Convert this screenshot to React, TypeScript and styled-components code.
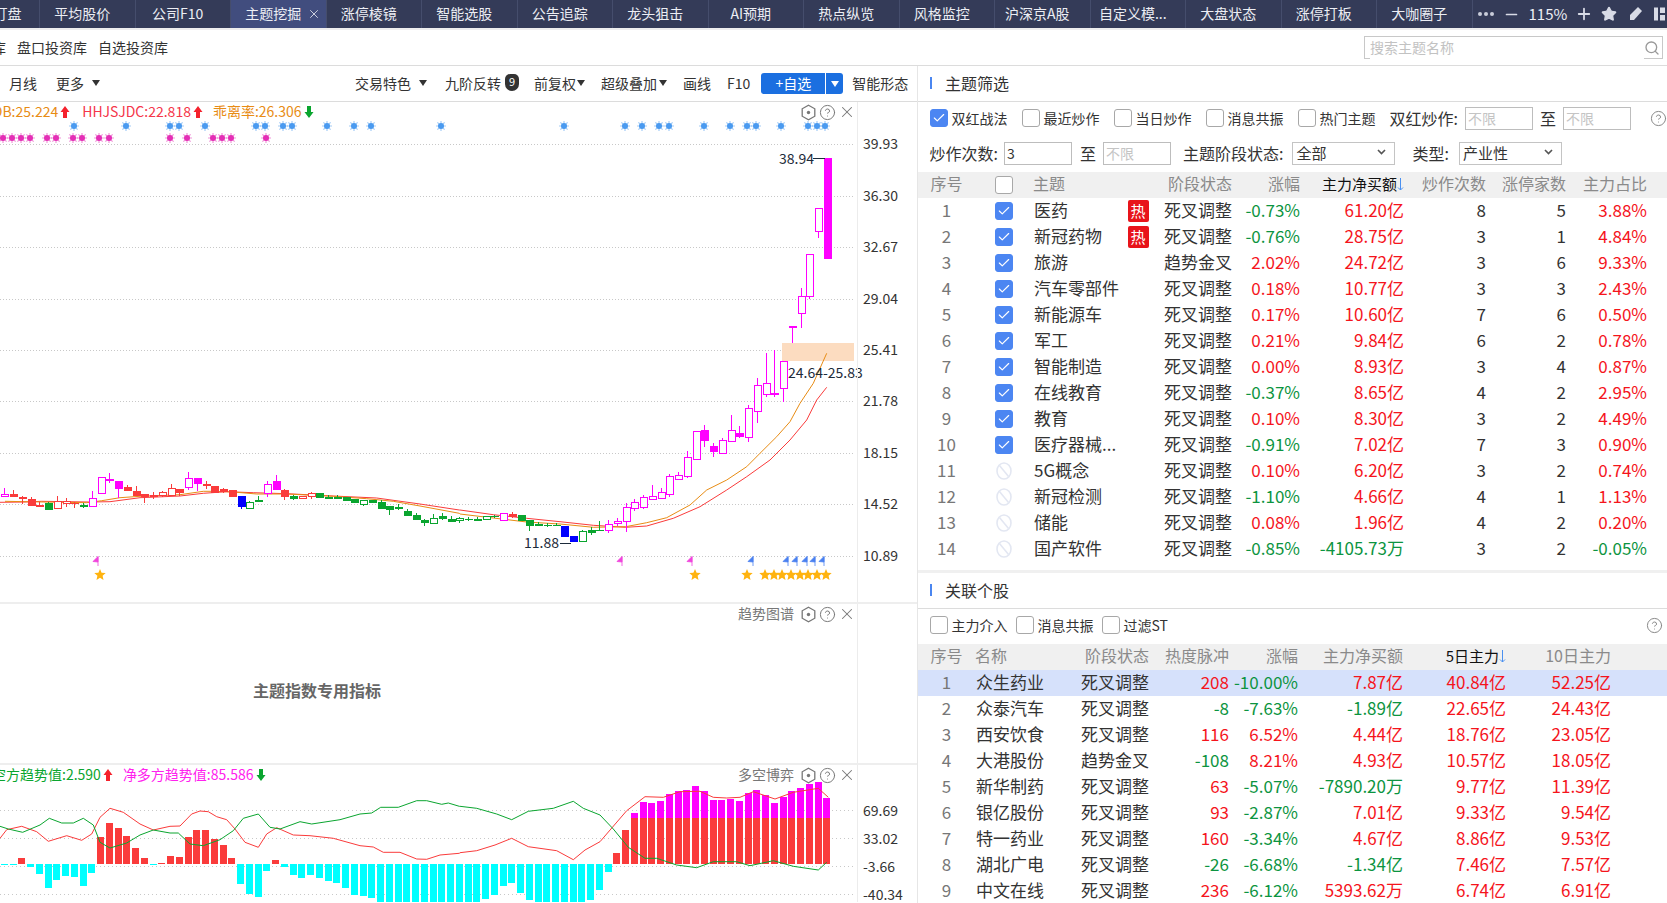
import React from 'react';
import styled, { createGlobalStyle } from 'styled-components';
import { Check, CircleHelp, Minus, Plus, Search, Star, X } from 'lucide-react';

const FONT = '"Noto Sans CJK SC", "Noto Sans", sans-serif';
const RED = '#f5141c';
const GREEN = '#0c9440';
const C_RED = '#fa3b3b';
const C_GREEN = '#0aa52f';
const C_MAGENTA = '#ff00ff';
const C_BLUE = '#0000ff';

const GlobalStyle = createGlobalStyle`
  html, body {
    margin: 0;
    height: 903px;
    overflow: hidden;
    background: #fff;
    font-family: ${FONT};
    color: #333;
  }
  * { box-sizing: border-box; }
`;

const Page = styled.div`
  width: 1667px;
  height: 903px;
  display: flex;
  flex-direction: column;
  overflow: hidden;
`;

/* 顶部标签栏 */
const TabBar = styled.div`
  height: 28px;
  flex: none;
  display: flex;
  background: #343b58;
  color: #eceef4;
  font-size: 14px;
  margin-left: -55.5px;
`;

const Tab = styled.div<{ $active?: boolean; $lead?: number }>`
  position: relative;
  width: 95.5px;
  flex: none;
  display: flex;
  align-items: center;
  justify-content: center;
  padding: 0 10px 2px ${p => p.$lead ?? 0}px;
  white-space: nowrap;
  border-right: 1px solid #454d6c;
  background: ${p => (p.$active ? '#414d7e' : 'transparent')};
`;

const TabClose = styled(X)`
  position: absolute;
  right: 5px;
  top: 7px;
  color: #d5d9e6;
`;

const WinTools = styled.div`
  display: flex;
  align-items: center;
  flex: none;
  padding-left: 4px;
  gap: 8px;
`;

const Percent = styled.span`
  font-size: 15px;
  margin-left: 1px;
  padding-bottom: 2px;
`;

const WinIcon = styled.svg`
  margin-left: 2px;
`;

const Strip = styled.div`
  height: 2px;
  flex: none;
  background: #eeeeee;
`;

/* 投资库 */
const SubBar = styled.div`
  height: 36px;
  flex: none;
  display: flex;
  align-items: center;
  font-size: 14px;
  border-bottom: 1px solid #dcdcdc;
  margin-left: -8px;
  padding-right: 4px;
`;

const SubLink = styled.span<{ $ml: number }>`
  margin-left: ${p => p.$ml}px;
  padding-bottom: 2px;
  white-space: nowrap;
`;

const SearchBox = styled.div`
  margin-left: auto;
  width: 299px;
  height: 23px;
  border: 1px solid #c8c8c8;
  display: flex;
  align-items: center;
  padding: 0 2px 0 5px;
  color: #999;
  input {
    flex: 1;
    min-width: 0;
    border: 0;
    outline: 0;
    padding: 0 0 2px;
    font: 14px ${FONT};
    &::placeholder { color: #c2c2c2; }
  }
`;

const Main = styled.div`
  flex: 1;
  min-height: 0;
  display: flex;
`;

const LeftPane = styled.div`
  width: 918px;
  flex: none;
  display: flex;
  flex-direction: column;
  border-right: 1px solid #e6e6e6;
`;

const ToolBar = styled.div`
  height: 36px;
  flex: none;
  display: flex;
  align-items: center;
  font-size: 14px;
  border-bottom: 1px solid #dcdcdc;
  white-space: nowrap;
`;

const ToolItem = styled.span<{ $ml: number }>`
  margin-left: ${p => p.$ml}px;
  padding-bottom: 2px;
  display: inline-flex;
  align-items: center;
`;

const Caret = styled.i<{ $ml?: number; $light?: boolean }>`
  display: inline-block;
  width: 0;
  height: 0;
  margin-left: ${p => p.$ml ?? 4}px;
  border-left: 4px solid transparent;
  border-right: 4px solid transparent;
  border-top: 6px solid ${p => (p.$light ? '#fff' : '#333')};
`;

const NineBadge = styled.span`
  width: 14px;
  height: 17px;
  margin-left: 4px;
  background: #333;
  color: #fff;
  font-size: 11px;
  line-height: 15px;
  text-align: center;
  border-radius: 5px 5px 7px 7px;
`;

const AddButton = styled.div`
  margin-left: 11px;
  width: 64px;
  height: 21px;
  background: #1b6fe0;
  color: #fff;
  border-radius: 3px 0 0 3px;
  text-align: center;
  line-height: 20px;
`;

const AddDrop = styled.div`
  margin-left: 1px;
  width: 17px;
  height: 21px;
  background: #1b6fe0;
  border-radius: 0 3px 3px 0;
  display: flex;
  align-items: center;
  justify-content: center;
`;

const ChartPanel = styled.div<{ $h: number; $line?: boolean }>`
  position: relative;
  height: ${p => p.$h}px;
  flex: none;
  overflow: hidden;
  border-bottom: ${p => (p.$line ? '2px solid #eeeeee' : '0')};
  &::after {
    content: '';
    position: absolute;
    left: 857px;
    top: 0;
    bottom: 0;
    width: 1px;
    background: #ececec;
  }
`;

const ChartSvg = styled.svg`
  display: block;
  font-family: ${FONT};
`;

const Legend = styled.div<{ $left: number }>`
  position: absolute;
  left: ${p => p.$left}px;
  top: 0;
  height: 20px;
  display: flex;
  align-items: center;
  font-size: 14px;
  white-space: nowrap;
`;

const LegendText = styled.span<{ $color: string; $ml?: number }>`
  color: ${p => p.$color};
  margin-left: ${p => p.$ml ?? 0}px;
  margin-right: 2px;
  padding-bottom: 2px;
`;

const PanelTools = styled.div`
  position: absolute;
  z-index: 1;
  right: 61px;
  top: 0;
  height: 20px;
  display: flex;
  align-items: center;
  gap: 2px;
  font-size: 14px;
  color: #777;
`;

const PanelName = styled.span`
  margin-right: 4px;
  padding-bottom: 2px;
`;

const CenterNote = styled.div`
  position: absolute;
  left: 0;
  width: 634px;
  top: 74px;
  text-align: center;
  font-size: 16px;
  font-weight: 700;
  color: #666;
`;

/* 右侧 */
const RightPane = styled.div`
  flex: 1;
  min-width: 0;
`;

const SectionTitle = styled.div`
  height: 36px;
  display: flex;
  align-items: center;
  font-size: 16px;
  padding: 0 0 2px 12px;
  border-bottom: 1px solid #dcdcdc;
  &::before {
    content: '';
    width: 2px;
    height: 12px;
    background: #4a86f0;
    margin-right: 13px;
  }
`;

const FilterRow = styled.div<{ $gap: number; $end?: number }>`
  height: 35px;
  display: flex;
  align-items: center;
  padding: 0 ${p => p.$end ?? 0}px 3px 11.5px;
  white-space: nowrap;
  gap: ${p => p.$gap}px;
`;

const CheckLabel = styled.label`
  display: inline-flex;
  align-items: center;
  gap: 4px;
  font-size: 14px;
`;

const CheckBox = styled.span<{ $on?: boolean }>`
  width: 18px;
  height: 18px;
  flex: none;
  border-radius: 3px;
  display: inline-flex;
  align-items: center;
  justify-content: center;
  color: #fff;
  background: ${p => (p.$on ? '#4c86f2' : '#fff')};
  border: 1px solid ${p => (p.$on ? '#4c86f2' : '#a8a8a8')};
`;

const FieldLabel = styled.span<{ $ml?: number }>`
  font-size: 16px;
  margin-left: ${p => p.$ml ?? 0}px;
`;

const NumInput = styled.input<{ $ml: number }>`
  width: 68px;
  height: 23px;
  margin-left: ${p => p.$ml}px;
  padding: 0 2px;
  border: 1px solid #bdbdbd;
  outline: 0;
  font: 14px ${FONT};
  color: #333;
  &::placeholder { color: #c4c4c4; }
`;

const SelectBox = styled.div<{ $ml: number }>`
  width: 103px;
  height: 23px;
  margin-left: ${p => p.$ml}px;
  padding: 0 8px 2px 3px;
  border: 1px solid #c4c4c4;
  display: flex;
  align-items: center;
  justify-content: space-between;
  font-size: 15px;
  svg { color: #555; }
`;

const HelpIcon = styled(CircleHelp)`
  margin-left: auto;
  color: #888;
  flex: none;
`;

const TopicGrid = '57px 58px 94px 22px 83px 68px 104px 82px 80px 81px';
const StockGrid = '57px 105px 69px 80px 69px 105px 103px 105px';

const HeadRow = styled.div<{ $cols: string }>`
  height: 26px;
  display: grid;
  grid-template-columns: ${p => p.$cols};
  align-items: center;
  background: #f0f0f0;
  font-size: 16px;
  color: #8a8a8a;
  white-space: nowrap;
`;

const BodyRow = styled.div<{ $cols: string; $picked?: boolean }>`
  height: 26px;
  display: grid;
  grid-template-columns: ${p => p.$cols};
  align-items: center;
  font-size: 17px;
  white-space: nowrap;
  background: ${p => (p.$picked ? '#d6e1fb' : '#fff')};
`;

const Cell = styled.span<{ $align?: string; $tone?: string }>`
  display: block;
  text-align: ${p => p.$align ?? 'right'};
  color: ${p => p.$tone ?? 'inherit'};
  line-height: 23px;
  padding-bottom: 3px;
`;

const NameCell = styled(Cell)`
  padding-left: 1px;
`;

const HeadCell = styled.span<{ $align?: string; $active?: boolean }>`
  display: inline-flex;
  align-items: center;
  justify-content: ${p => (p.$align === 'left' ? 'flex-start' : p.$align === 'center' ? 'center' : 'flex-end')};
  color: ${p => (p.$active ? '#111' : 'inherit')};
  font-size: ${p => (p.$active ? 15 : 16)}px;
  line-height: 23px;
  padding-bottom: 3px;
`;

const IconCell = styled.span`
  display: flex;
  justify-content: center;
  align-items: center;
`;

const HotBadge = styled.span`
  width: 21px;
  height: 22px;
  background: #e8141a;
  color: #fff;
  font-size: 15px;
  line-height: 21px;
  text-align: center;
  border-radius: 2px;
`;

const SectionGap = styled.div`
  height: 11px;
  border-bottom: 3px solid #f0f0f0;
`;

const tone = (v: string) => (v.startsWith('-') ? GREEN : RED);

const xOf = (i: number) => 4.3 + 8.75 * i;

type CandleRow = [string, number, number, number?, number?];

// 纵坐标按截图的 3 倍像素记录，base 为对应的起点
const lowCandles: CandleRow[] = [
  ['m', 223, 230, 205, 230], ['R', 223, 230, 210, 232], ['R', 232, 236, 228, 252], ['R', 238, 257, 232, 258],
  ['R', 255, 260, 245, 260], ['G', 250, 269, 245, 270], ['r', 245, 265, 228, 265], ['r', 245, 250, 235, 260],
  ['R', 248, 251, 245, 263], ['G', 255, 260, 250, 263], ['m', 236, 260, 213, 260], ['m', 172, 220],
  ['M', 178, 183, 160, 190], ['M', 183, 206, 183, 235], ['R', 202, 212, 195, 212], ['R', 213, 228, 198, 228],
  ['R', 222, 232, 222, 248], ['R', 225, 231, 216, 236], ['r', 217, 227, 213, 230], ['r', 205, 227, 192, 227],
  ['R', 208, 219, 208, 228], ['m', 175, 203, 156, 210], ['M', 175, 191, 175, 212], ['R', 193, 197, 183, 207],
  ['R', 198, 218], ['R', 208, 216, 204, 218], ['R', 210, 231], ['B', 228, 260, 228, 266],
  ['g', 248, 265, 243, 265], ['G', 240, 245, 228, 245], ['m', 193, 220, 183, 230], ['M', 183, 209, 165, 209],
  ['R', 210, 231, 207, 240], ['G', 228, 236, 225, 240], ['r', 229, 236], ['r', 221, 230, 216, 236],
  ['G', 220, 234], ['G', 232, 236, 225, 236], ['G', 230, 236, 226, 236], ['G', 232, 242],
  ['G', 238, 248, 238, 250], ['g', 241, 254, 241, 258], ['G', 240, 248], ['G', 247, 266, 240, 266],
  ['G', 259, 269, 259, 285], ['G', 262, 265, 253, 270], ['G', 274, 287, 267, 287], ['G', 286, 299, 280, 299],
  ['G', 301, 310, 298, 318], ['g', 296, 310, 282, 310], ['G', 289, 296, 280, 300], ['G', 297, 305, 289, 305],
  ['g', 295, 302, 292, 308], ['G', 296, 300, 292, 303], ['G', 298, 302, 290, 304], ['g', 290, 298],
  ['G', 288, 292, 285, 294], ['m', 281, 301], ['R', 281, 291, 275, 295], ['G', 284, 304],
  ['G', 301, 319, 301, 332], ['G', 313, 317, 305, 317], ['G', 314, 317, 309, 322], ['G', 315, 319, 308, 319],
  ['B', 319, 350], ['B', 349, 366], ['g', 334, 364, 330, 364], ['G', 331, 340, 320, 346],
  ['G', 330, 334, 304, 334], ['m', 314, 331, 300, 338], ['m', 305, 311, 295, 318], ['m', 263, 304, 250, 335],
  ['m', 247, 265, 238, 272], ['m', 233, 262, 225, 266], ['m', 230, 238, 196, 238], ['m', 218, 235, 205, 235],
  ['m', 170, 223, 162, 230], ['m', 167, 178, 155, 178], ['m', 113, 168, 93, 175], ['m', 35, 118],
  ['M', 29, 64, 15, 80], ['M', 79, 97, 70, 112], ['m', 62, 100, 54, 100],
];

const highCandles: CandleRow[] = [
  ['m', 872, 903, 825, 903], ['M', 880, 890, 858, 895], ['m', 805, 892, 795, 905], ['m', 737, 815, 715, 848],
  ['m', 731, 763, 640, 772], ['M', 760, 764, 631, 772], ['m', 664, 745, 664, 785], ['M', 559, 563, 559, 608],
  ['m', 470, 520, 444, 563], ['m', 343, 470, 343, 477], ['m', 205, 274, 205, 293], ['M', 55, 356],
];

const colorOf = (k: string) => {
  const key = k.toLowerCase();
  if (key === 'r') return C_RED;
  if (key === 'g') return C_GREEN;
  if (key === 'm') return C_MAGENTA;
  return C_BLUE;
};

const Candle = ({ row, i, base }: { row: CandleRow; i: number; base: number }) => {
  const [k, top, bottom, wTop, wBottom] = row;
  const x = Math.round(xOf(i));
  const y = (v: number) => (base + v) / 3;
  const color = colorOf(k);
  const filled = k === k.toUpperCase();
  return (
    <g shapeRendering="crispEdges">
      {wTop !== undefined && wBottom !== undefined && (
        <line x1={x + 0.5} x2={x + 0.5} y1={y(wTop)} y2={y(wBottom)} stroke={color} />
      )}
      {filled ? (
        <rect x={x - 3.5} width={8} y={y(top)} height={Math.max(y(bottom) - y(top), 1.4)} fill={color} />
      ) : (
        <rect x={x - 3} width={7} y={y(top)} height={y(bottom) - y(top)} fill="#fff" stroke={color} />
      )}
    </g>
  );
};

type Pt = [number, number];
const conv = (pts: Pt[], ox: number, oy: number) => pts.map(([x, y]) => `${(ox + x / 3).toFixed(1)},${(oy + y / 3).toFixed(1)}`).join(' ');

const orangeLine = [
  conv([[15, 244], [130, 246], [260, 248], [305, 242], [360, 233], [420, 229], [540, 224], [610, 214], [640, 214], [700, 216], [770, 222], [860, 222], [1000, 229], [1100, 236], [1180, 244], [1260, 258], [1378, 280]], 0, 420),
  conv([[0, 282], [100, 294], [200, 306], [300, 312], [400, 322], [497, 320], [560, 308], [620, 293], [690, 255], [740, 210], [800, 180], [860, 140], [900, 100], [950, 50], [990, 5]], 460, 420),
  conv([[600, 790], [640, 730], [680, 640]], 600, 140),
].join(' ');

const redLine = [
  conv([[0, 247], [75, 246], [125, 244], [265, 246], [330, 245], [420, 233], [540, 228], [610, 220], [680, 215], [760, 218], [860, 221], [1000, 228], [1130, 234], [1260, 252], [1378, 270]], 0, 420),
  conv([[0, 270], [100, 284], [200, 295], [300, 305], [400, 316], [497, 322], [560, 318], [640, 295], [720, 260], [800, 210], [860, 170], [930, 120], [990, 60], [1040, 0]], 460, 420),
  conv([[650, 780], [680, 742]], 600, 140),
].join(' ');

const blueDots = [74, 126, 170, 179, 205, 256, 265, 283, 292, 327, 354, 371, 441, 564, 625, 642, 659, 669, 704, 730, 747, 756, 781, 808, 817, 825];
const pinkDots = [3, 12, 21, 30, 47, 56, 73, 82, 99, 109, 170, 187, 213, 222, 231, 266];
const pinkFlags = [98, 622, 692];
const blueFlags = [753, 788, 797, 807, 815, 824];
const goldStars = [100, 695, 747, 765, 774, 782, 791, 800, 808, 817, 826];
const priceAxis: [string, number][] = [
  ['39.93', 144], ['36.30', 196], ['32.67', 247], ['29.04', 299], ['25.41', 350], ['21.78', 401], ['18.15', 453], ['14.52', 504], ['10.89', 556],
];

const Dot = ({ x, y, color }: { x: number; y: number; color: string }) => (
  <g stroke={color} strokeWidth={1.2}>
    <circle cx={x} cy={y} r={3} fill={color} stroke="none" />
    <path d={`M${x - 5} ${y}H${x + 5}M${x} ${y - 5}V${y + 5}M${x - 3.6} ${y - 3.6}L${x + 3.6} ${y + 3.6}M${x + 3.6} ${y - 3.6}L${x - 3.6} ${y + 3.6}`} opacity={0.5} />
  </g>
);

const Flag = ({ x, color }: { x: number; color: string }) => (
  <g fill={color} stroke={color} strokeWidth={0.8}>
    <polygon points={`${x - 5},561.5 ${x},556.5 ${x},562`} />
    <line x1={x} x2={x} y1={556.5} y2={566} />
  </g>
);

const GoldStar = ({ x }: { x: number }) => {
  const pts: string[] = [];
  for (let k = 0; k < 10; k += 1) {
    const r = k % 2 === 0 ? 6 : 2.7;
    const a = -Math.PI / 2 + (k * Math.PI) / 5;
    pts.push(`${(x + r * Math.cos(a)).toFixed(1)},${(575 + r * Math.sin(a)).toFixed(1)}`);
  }
  return <polygon points={pts.join(' ')} fill="#ffb30f" />;
};

const MainChart = () => (
  <ChartSvg width={917} height={501} viewBox="0 102 917 501">
    {priceAxis.map(([label, y]) => (
      <g key={label}>
        <line x1={0} x2={853} y1={y + 0.5} y2={y + 0.5} stroke="#c8c8c8" strokeDasharray="1 2" />
        <text x={863} y={y + 5} fontSize={14} fill="#333">{label}</text>
      </g>
    ))}
    {blueDots.map(x => <Dot key={x} x={x} y={126} color="#4a9af0" />)}
    {pinkDots.map(x => <Dot key={x} x={x} y={138} color="#e42fb6" />)}
    <rect x={782} y={343} width={72} height={18} fill="#fcdcc0" />
    <polyline points={redLine} fill="none" stroke={C_RED} strokeWidth={1} />
    <polyline points={orangeLine} fill="none" stroke="#e88c14" strokeWidth={1} />
    {lowCandles.map((row, i) => <Candle key={i} row={row} i={i} base={1260} />)}
    {highCandles.map((row, i) => <Candle key={i} row={row} i={i + 83} base={420} />)}
    <text x={779} y={164} fontSize={14} fill="#1d2b3a">38.94</text>
    <line x1={813} x2={825} y1={158.5} y2={158.5} stroke="#1d2b3a" />
    <text x={788} y={378} fontSize={14} fill="#1d2b3a">24.64-25.83</text>
    <text x={524} y={548} fontSize={14} fill="#1d2b3a">11.88</text>
    <line x1={560} x2={571} y1={543.5} y2={543.5} stroke="#1d2b3a" />
    {pinkFlags.map(x => <Flag key={x} x={x} color="#f044dc" />)}
    {blueFlags.map(x => <Flag key={x} x={x} color="#4a80f0" />)}
    {goldStars.map(x => <GoldStar key={x} x={x} />)}
  </ChartSvg>
);

const barTops: [string, number][] = [
  ['c', 347], ['c', 347], ['r', 327], ['c', 354], ['c', 375], ['c', 417], ['c', 393], ['c', 381], ['c', 384], ['c', 411],
  ['c', 372], ['r', 264], ['r', 222], ['r', 237], ['r', 261], ['r', 297], ['r', 327], ['c', 347], ['r', 343], ['r', 321],
  ['r', 324], ['r', 264], ['r', 243], ['r', 243], ['r', 270], ['r', 288], ['r', 327], ['c', 405], ['c', 435], ['c', 443],
  ['c', 366], ['r', 333], ['c', 354], ['c', 378], ['c', 387], ['c', 378], ['c', 387], ['c', 396], ['c', 402], ['c', 417],
  ['c', 438], ['c', 441], ['c', 447], ['c', 459], ['c', 459], ['c', 459], ['c', 459], ['c', 459], ['c', 459], ['c', 459],
  ['c', 459], ['c', 459], ['c', 459], ['c', 459], ['c', 459], ['c', 450], ['c', 438], ['c', 411], ['c', 402], ['c', 432],
  ['c', 453], ['c', 459], ['c', 459], ['c', 459], ['c', 459], ['c', 459], ['c', 459], ['c', 453], ['c', 423], ['c', 369],
  ['r', 312], ['r', 243], ['r', 192], ['r', 159], ['r', 162], ['r', 156], ['r', 135], ['r', 126], ['r', 123], ['r', 111],
  ['r', 126], ['r', 153], ['r', 153], ['r', 150], ['r', 156], ['r', 132], ['r', 123], ['r', 138], ['r', 162], ['r', 145],
  ['r', 126], ['r', 117], ['r', 105], ['r', 99], ['r', 147],
];

const gameRed = [
  conv([[0, 268], [20, 242], [65, 232], [110, 248], [145, 277], [200, 260], [245, 274], [275, 255], [300, 205], [330, 178], [370, 190], [420, 225], [460, 243], [510, 232], [540, 231], [575, 195], [600, 186], [625, 188], [650, 203], [680, 212], [705, 240], [735, 280], [775, 295], [800, 255], [830, 236], [880, 258], [930, 260], [1000, 268], [1080, 290], [1120, 294], [1150, 310], [1200, 310], [1250, 330], [1280, 331], [1320, 318], [1378, 313]], 0, 750),
  conv([[0, 311], [50, 305], [105, 288], [155, 268], [205, 293], [290, 305], [340, 332], [375, 303], [420, 278], [500, 185], [555, 143], [610, 145], [660, 128], [720, 127], [760, 145], [800, 147], [840, 145], [880, 128], [945, 150], [1000, 130], [1075, 118], [1105, 145]], 460, 750),
].join(' ');

const gameGreen = [
  conv([[0, 232], [25, 240], [68, 250], [120, 228], [148, 208], [185, 222], [220, 222], [250, 208], [280, 228], [300, 280], [330, 297], [380, 282], [420, 258], [460, 243], [510, 252], [535, 252], [570, 285], [610, 290], [660, 272], [700, 245], [730, 208], [775, 195], [810, 235], [840, 240], [900, 218], [935, 225], [1020, 212], [1080, 195], [1115, 192], [1142, 175], [1195, 175], [1250, 155], [1280, 155], [1325, 166], [1345, 162], [1378, 172]], 0, 750),
  conv([[0, 172], [50, 178], [110, 195], [155, 212], [205, 187], [280, 178], [340, 157], [370, 178], [420, 198], [460, 240], [505, 295], [555, 328], [590, 328], [650, 348], [710, 356], [760, 338], [830, 338], [870, 350], [940, 335], [1000, 352], [1075, 363], [1100, 340]], 460, 750),
].join(' ');

const gameAxis: [string, number][] = [['69.69', 811], ['33.02', 839], ['-3.66', 867], ['-40.34', 895]];

const GameChart = () => (
  <ChartSvg width={917} height={137} viewBox="0 766 917 137">
    {gameAxis.map(([label, y]) => (
      <g key={label}>
        <line x1={0} x2={853} y1={y + 0.5} y2={y + 0.5} stroke="#c8c8c8" strokeDasharray="1 3" />
        <text x={863} y={y + 6} fontSize={14} fill="#333">{label}</text>
      </g>
    ))}
    <g shapeRendering="crispEdges">
      {barTops.map(([k, v], i) => {
        const x = xOf(i) - 3.5;
        const yv = 750 + v / 3;
        if (k === 'c') return <rect key={i} x={x} width={7} y={865} height={yv - 865} fill="#00ffff" />;
        return (
          <g key={i}>
            <rect x={x} width={7} y={yv} height={865 - yv} fill={C_RED} />
            {v < 207 && <rect x={x} width={7} y={yv} height={819 - yv} fill={C_MAGENTA} />}
          </g>
        );
      })}
    </g>
    <polyline points={gameRed} fill="none" stroke={C_RED} strokeWidth={1} />
    <polyline points={gameGreen} fill="none" stroke={C_GREEN} strokeWidth={1} />
  </ChartSvg>
);

const Arrow = ({ up, color }: { up?: boolean; color: string }) => (
  <svg width={10} height={14} viewBox="0 0 10 14">
    <path d={up ? 'M5 1 L9.5 7 H7 V13 H3 V7 H.5 Z' : 'M5 13 L9.5 7 H7 V1 H3 V7 H.5 Z'} fill={color} />
  </svg>
);

const SortArrow = () => (
  <svg width={7} height={14} viewBox="0 0 7 14">
    <path d="M3.5 1V13M1 10.5L3.5 13L6 10.5" stroke="#4a90f0" fill="none" />
  </svg>
);

const HexIcon = () => (
  <svg width={17} height={17} viewBox="0 0 17 17">
    <path d="M8.5 1.2 14.8 4.8V12.2L8.5 15.8 2.2 12.2V4.8Z" fill="none" stroke="#777" strokeWidth={1.3} />
    <circle cx={8.5} cy={8.5} r={1.7} fill="#777" />
  </svg>
);

const PanelIcons = () => (
  <>
    <HexIcon />
    <CircleHelp size={17} strokeWidth={1.4} />
    <X size={18} strokeWidth={1.4} />
  </>
);

const BanIcon = () => (
  <svg width={18} height={20} viewBox="0 0 18 20">
    <ellipse cx={9} cy={10} rx={7} ry={8} fill="none" stroke="#e3e7f2" strokeWidth={1.6} />
    <path d="M4.5 4.5 13.5 15.5" stroke="#e3e7f2" strokeWidth={1.6} />
  </svg>
);

const Chevron = () => (
  <svg width={9} height={6} viewBox="0 0 9 6">
    <path d="M1 1 4.5 4.6 8 1" fill="none" stroke="currentColor" strokeWidth={1.6} />
  </svg>
);

const tabs = ['盯盘', '平均股价', '公司F10', '主题挖掘', '涨停棱镜', '智能选股', '公告追踪', '龙头狙击', 'AI预期', '热点纵览', '风格监控', '沪深京A股', '自定义模...', '大盘状态', '涨停打板', '大咖圈子'];

const topics: [string, boolean, string, string, string, string, string, string][] = [
  ['医药', true, '死叉调整', '-0.73%', '61.20亿', '8', '5', '3.88%'],
  ['新冠药物', true, '死叉调整', '-0.76%', '28.75亿', '3', '1', '4.84%'],
  ['旅游', false, '趋势金叉', '2.02%', '24.72亿', '3', '6', '9.33%'],
  ['汽车零部件', false, '死叉调整', '0.18%', '10.77亿', '3', '3', '2.43%'],
  ['新能源车', false, '死叉调整', '0.17%', '10.60亿', '7', '6', '0.50%'],
  ['军工', false, '死叉调整', '0.21%', '9.84亿', '6', '2', '0.78%'],
  ['智能制造', false, '死叉调整', '0.00%', '8.93亿', '3', '4', '0.87%'],
  ['在线教育', false, '死叉调整', '-0.37%', '8.65亿', '4', '2', '2.95%'],
  ['教育', false, '死叉调整', '0.10%', '8.30亿', '3', '2', '4.49%'],
  ['医疗器械...', false, '死叉调整', '-0.91%', '7.02亿', '7', '3', '0.90%'],
  ['5G概念', false, '死叉调整', '0.10%', '6.20亿', '3', '2', '0.74%'],
  ['新冠检测', false, '死叉调整', '-1.10%', '4.66亿', '4', '1', '1.13%'],
  ['储能', false, '死叉调整', '0.08%', '1.96亿', '4', '2', '0.20%'],
  ['国产软件', false, '死叉调整', '-0.85%', '-4105.73万', '3', '2', '-0.05%'],
];

const stocks: string[][] = [
  ['众生药业', '死叉调整', '208', '-10.00%', '7.87亿', '40.84亿', '52.25亿'],
  ['众泰汽车', '死叉调整', '-8', '-7.63%', '-1.89亿', '22.65亿', '24.43亿'],
  ['西安饮食', '死叉调整', '116', '6.52%', '4.44亿', '18.76亿', '23.05亿'],
  ['大港股份', '趋势金叉', '-108', '8.21%', '4.93亿', '10.57亿', '18.05亿'],
  ['新华制药', '死叉调整', '63', '-5.07%', '-7890.20万', '9.77亿', '11.39亿'],
  ['银亿股份', '死叉调整', '93', '-2.87%', '7.01亿', '9.33亿', '9.54亿'],
  ['特一药业', '死叉调整', '160', '-3.34%', '4.67亿', '8.86亿', '9.53亿'],
  ['湖北广电', '死叉调整', '-26', '-6.68%', '-1.34亿', '7.46亿', '7.57亿'],
  ['中文在线', '死叉调整', '236', '-6.12%', '5393.62万', '6.74亿', '6.91亿'],
];

const App = () => (
  <Page>
    <GlobalStyle />
    <TabBar>
      {tabs.map((t, i) => (
        <Tab key={t} $active={i === 3} $lead={i === 0 ? 41.5 : 0}>
          {t}
          {i === 3 && <TabClose size={14} strokeWidth={1.6} />}
        </Tab>
      ))}
      <WinTools>
        <svg width={18} height={6} viewBox="0 0 18 6"><g fill="#c9cdda"><circle cx={3} cy={3} r={2} /><circle cx={9} cy={3} r={2} /><circle cx={15} cy={3} r={2} /></g></svg>
        <Minus size={17} strokeWidth={2.4} color="#d8dbe6" />
        <Percent>115%</Percent>
        <Plus size={18} strokeWidth={2.4} color="#d8dbe6" />
        <Star size={16} fill="#d8dbe6" color="#d8dbe6" />
        <WinIcon width={16} height={16} viewBox="0 0 16 16"><path d="M11 1 15 5 7 14H3V9Z" fill="#d8dbe6" /></WinIcon>
        <WinIcon width={12} height={16} viewBox="0 0 12 16"><path d="M1 1.5H5V14.5H1ZM7 1.5H12V7H7ZM7 9H12V14.5H7Z" fill="#d8dbe6" /></WinIcon>
      </WinTools>
    </TabBar>
    <Strip />
    <SubBar>
      <SubLink $ml={0}>库</SubLink>
      <SubLink $ml={11}>盘口投资库</SubLink>
      <SubLink $ml={11}>自选投资库</SubLink>
      <SearchBox>
        <input placeholder="搜索主题名称" />
        <Search size={16} />
      </SearchBox>
    </SubBar>
    <Main>
      <LeftPane>
        <ToolBar>
          <ToolItem $ml={9}>月线</ToolItem>
          <ToolItem $ml={19}>更多<Caret $ml={8} /></ToolItem>
          <ToolItem $ml={255}>交易特色<Caret $ml={8} /></ToolItem>
          <ToolItem $ml={18}>九阶反转<NineBadge>9</NineBadge></ToolItem>
          <ToolItem $ml={15}>前复权<Caret $ml={1} /></ToolItem>
          <ToolItem $ml={16}>超级叠加<Caret $ml={2} /></ToolItem>
          <ToolItem $ml={16}>画线</ToolItem>
          <ToolItem $ml={16}>F10</ToolItem>
          <AddButton>+自选</AddButton>
          <AddDrop><Caret $ml={0} $light /></AddDrop>
          <ToolItem $ml={9}>智能形态</ToolItem>
        </ToolBar>
        <ChartPanel $h={502} $line>
          <MainChart />
          <Legend $left={-8}>
            <LegendText $color="#e88c14">OB:25.224</LegendText>
            <Arrow up color="#f5222d" />
            <LegendText $color="#f5364a" $ml={12}>HHJSJDC:22.818</LegendText>
            <Arrow up color="#f5222d" />
            <LegendText $color="#e88c14" $ml={10}>乖离率:26.306</LegendText>
            <Arrow color="#0aa52f" />
          </Legend>
          <PanelTools><PanelIcons /></PanelTools>
        </ChartPanel>
        <ChartPanel $h={161} $line>
          <PanelTools>
            <PanelName>趋势图谱</PanelName>
            <PanelIcons />
          </PanelTools>
          <CenterNote>主题指数专用指标</CenterNote>
        </ChartPanel>
        <ChartPanel $h={137}>
          <GameChart />
          <Legend $left={-8}>
            <LegendText $color="#0aa52f">空方趋势值:2.590</LegendText>
            <Arrow up color="#f5222d" />
            <LegendText $color="#ff22ee" $ml={10}>净多方趋势值:85.586</LegendText>
            <Arrow color="#0aa52f" />
          </Legend>
          <PanelTools>
            <PanelName>多空博弈</PanelName>
            <PanelIcons />
          </PanelTools>
        </ChartPanel>
      </LeftPane>
      <RightPane>
        <SectionTitle>主题筛选</SectionTitle>
        <FilterRow $gap={14}>
          <CheckLabel><CheckBox $on><Check size={14} strokeWidth={2} /></CheckBox>双红战法</CheckLabel>
          <CheckLabel><CheckBox />最近炒作</CheckLabel>
          <CheckLabel><CheckBox />当日炒作</CheckLabel>
          <CheckLabel><CheckBox />消息共振</CheckLabel>
          <CheckLabel><CheckBox />热门主题</CheckLabel>
          <FieldLabel>双红炒作:</FieldLabel>
          <NumInput $ml={-7} placeholder="不限" />
          <FieldLabel $ml={-7}>至</FieldLabel>
          <NumInput $ml={-7} placeholder="不限" />
          <HelpIcon size={17} strokeWidth={1.4} />
        </FilterRow>
        <FilterRow $gap={0}>
          <FieldLabel>炒作次数:</FieldLabel>
          <NumInput $ml={6} defaultValue="3" />
          <FieldLabel $ml={8}>至</FieldLabel>
          <NumInput $ml={7} placeholder="不限" />
          <FieldLabel $ml={12}>主题阶段状态:</FieldLabel>
          <SelectBox $ml={9}>全部<Chevron /></SelectBox>
          <FieldLabel $ml={17}>类型:</FieldLabel>
          <SelectBox $ml={10}>产业性<Chevron /></SelectBox>
        </FilterRow>
        <HeadRow $cols={TopicGrid}>
          <HeadCell $align="center">序号</HeadCell>
          <IconCell><CheckBox /></IconCell>
          <HeadCell $align="left">主题</HeadCell>
          <span />
          <HeadCell>阶段状态</HeadCell>
          <HeadCell>涨幅</HeadCell>
          <HeadCell $active>主力净买额<SortArrow /></HeadCell>
          <HeadCell>炒作次数</HeadCell>
          <HeadCell>涨停家数</HeadCell>
          <HeadCell>主力占比</HeadCell>
        </HeadRow>
        {topics.map(([name, hot, stage, rise, net, times, limit, ratio], i) => (
          <BodyRow key={name} $cols={TopicGrid}>
            <Cell $align="center" $tone="#777">{i + 1}</Cell>
            <IconCell>
              {i < 10 ? <CheckBox $on><Check size={14} strokeWidth={2} /></CheckBox> : <BanIcon />}
            </IconCell>
            <NameCell $align="left">{name}</NameCell>
            <IconCell>{hot && <HotBadge>热</HotBadge>}</IconCell>
            <Cell>{stage}</Cell>
            <Cell $tone={tone(rise)}>{rise}</Cell>
            <Cell $tone={tone(net)}>{net}</Cell>
            <Cell>{times}</Cell>
            <Cell>{limit}</Cell>
            <Cell $tone={tone(ratio)}>{ratio}</Cell>
          </BodyRow>
        ))}
        <SectionGap />
        <SectionTitle>关联个股</SectionTitle>
        <FilterRow $gap={8} $end={4}>
          <CheckLabel><CheckBox />主力介入</CheckLabel>
          <CheckLabel><CheckBox />消息共振</CheckLabel>
          <CheckLabel><CheckBox />过滤ST</CheckLabel>
          <HelpIcon size={17} strokeWidth={1.4} />
        </FilterRow>
        <HeadRow $cols={StockGrid}>
          <HeadCell $align="center">序号</HeadCell>
          <HeadCell $align="left">名称</HeadCell>
          <HeadCell>阶段状态</HeadCell>
          <HeadCell>热度脉冲</HeadCell>
          <HeadCell>涨幅</HeadCell>
          <HeadCell>主力净买额</HeadCell>
          <HeadCell $active>5日主力<SortArrow /></HeadCell>
          <HeadCell>10日主力</HeadCell>
        </HeadRow>
        {stocks.map(([name, stage, heat, rise, net, five, ten], i) => (
          <BodyRow key={name} $cols={StockGrid} $picked={i === 0}>
            <Cell $align="center" $tone="#777">{i + 1}</Cell>
            <NameCell $align="left">{name}</NameCell>
            <Cell>{stage}</Cell>
            <Cell $tone={tone(heat)}>{heat}</Cell>
            <Cell $tone={tone(rise)}>{rise}</Cell>
            <Cell $tone={tone(net)}>{net}</Cell>
            <Cell $tone={tone(five)}>{five}</Cell>
            <Cell $tone={tone(ten)}>{ten}</Cell>
          </BodyRow>
        ))}
      </RightPane>
    </Main>
  </Page>
);

export default App;
